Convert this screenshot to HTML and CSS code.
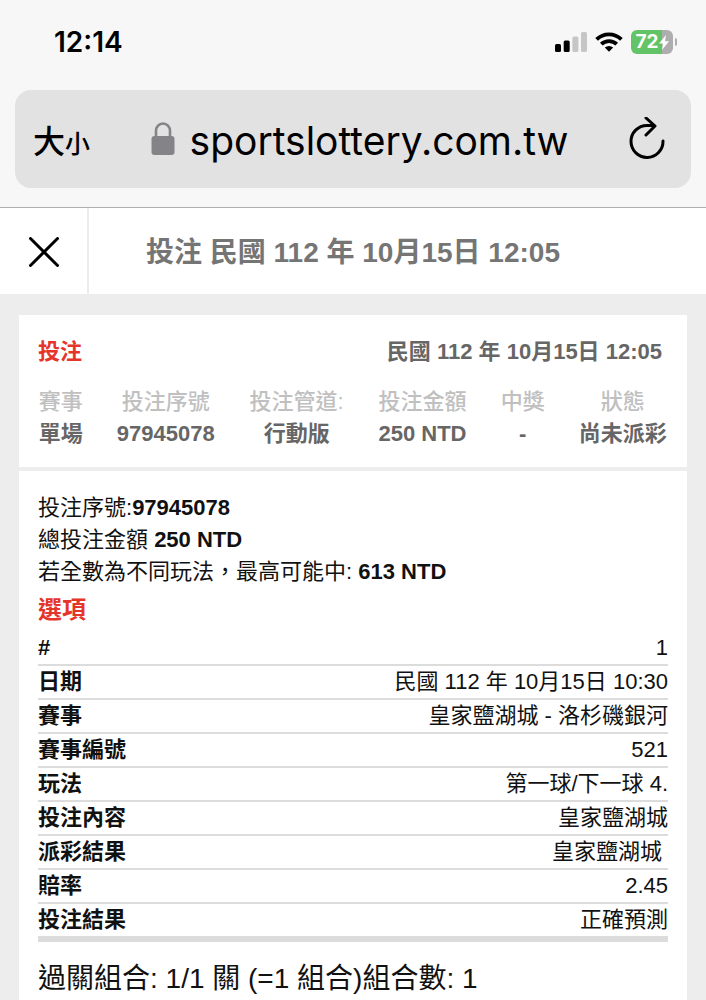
FILE: index.html
```html
<!DOCTYPE html>
<html lang="zh-Hant-TW">
<head>
    <meta charset="UTF-8">
    <meta name="viewport" content="width=device-width, initial-scale=1.0">
    <title>投注</title>
    <link rel="stylesheet" href="styles.css">
</head>
<body>
    <div class="browser">
        <div class="status">
            <span class="time">12:14</span>
            <div class="status-icons">
                <svg width="32" height="20" viewBox="0 0 32 20" aria-hidden="true">
                    <rect x="0" y="12" width="6" height="8" rx="1.5" fill="#000"/>
                    <rect x="8.7" y="8.5" width="6" height="11.5" rx="1.5" fill="#000"/>
                    <rect x="17.4" y="4.5" width="6" height="15.5" rx="1.5" fill="#c6c6c6"/>
                    <rect x="26" y="0" width="6" height="20" rx="1.5" fill="#c6c6c6"/>
                </svg>
                <svg width="28" height="20" viewBox="0 0 28 20" aria-hidden="true">
                    <g fill="none" stroke="#000" stroke-width="3.8">
                        <path d="M1.6 7.4a17.6 17.6 0 0 1 24.8 0"/>
                        <path d="M6.3 12.2a11 11 0 0 1 15.4 0"/>
                    </g>
                    <path d="M9.8 15.6a6 6 0 0 1 8.4 0L14 19.8z" fill="#000"/>
                </svg>
                <div class="battery">
                    <span class="battery-body">72<svg width="10" height="15" viewBox="0 0 10 15" aria-hidden="true"><path d="M7 0 0 8.5h4L3 15l7-8.7H6z" fill="#fff"/></svg></span>
                    <span class="battery-tip"></span>
                </div>
            </div>
        </div>
        <div class="address">
            <button type="button" class="text-size"><span class="big">大</span><span class="small">小</span></button>
            <a class="url" href="#">
                <svg width="24" height="34" viewBox="0 0 24 34" aria-hidden="true">
                    <path d="M5 16V9a7 7.5 0 0 1 14 0v7" fill="none" stroke="#838388" stroke-width="2.6"/>
                    <rect x="0.5" y="14" width="23" height="19" rx="3" fill="#838388"/>
                </svg>
                <span>sportslottery.com.tw</span>
            </a>
            <button type="button" class="reload" aria-label="重新載入">
                <svg width="36" height="44" viewBox="0 0 36 44" fill="none" stroke="#000" stroke-width="3" stroke-linecap="round" stroke-linejoin="round" aria-hidden="true">
                    <path d="M34 24a16 16 0 1 1-16-15.6h7"/>
                    <path d="M17 1l9 8-9 9"/>
                </svg>
            </button>
        </div>
    </div>

    <header class="title-bar">
        <button type="button" class="close" aria-label="關閉">
            <svg width="30" height="30" viewBox="0 0 30 30" stroke="#000" stroke-width="3" stroke-linecap="round" aria-hidden="true">
                <path d="M1.5 1.5l27 27M28.5 1.5l-27 27"/>
            </svg>
        </button>
        <h1>投注 民國 112 年 10月15日 12:05</h1>
    </header>

    <main>
        <section class="summary">
            <div class="summary-head">
                <h2>投注</h2>
                <span>民國 112 年 10月15日 12:05</span>
            </div>
            <table>
                <thead>
                    <tr><th>賽事</th><th>投注序號</th><th>投注管道:</th><th>投注金額</th><th>中獎</th><th>狀態</th></tr>
                </thead>
                <tbody>
                    <tr><td>單場</td><td>97945078</td><td>行動版</td><td>250 NTD</td><td>-</td><td>尚未派彩</td></tr>
                </tbody>
            </table>
        </section>

        <section class="detail">
            <p>投注序號:<b>97945078</b></p>
            <p>總投注金額 <b>250 NTD</b></p>
            <p>若全數為不同玩法，最高可能中: <b>613 NTD</b></p>
            <h3>選項</h3>
            <table>
                <tr><th>#</th><td>1</td></tr>
                <tr><th>日期</th><td>民國 112 年 10月15日 10:30</td></tr>
                <tr><th>賽事</th><td>皇家鹽湖城 - 洛杉磯銀河</td></tr>
                <tr><th>賽事編號</th><td>521</td></tr>
                <tr><th>玩法</th><td>第一球/下一球 4.</td></tr>
                <tr><th>投注內容</th><td>皇家鹽湖城</td></tr>
                <tr><th>派彩結果</th><td>皇家鹽湖城&nbsp;</td></tr>
                <tr><th>賠率</th><td>2.45</td></tr>
                <tr><th>投注結果</th><td>正確預測</td></tr>
            </table>
            <p class="combo">過關組合: 1/1 關 (=1 組合)組合數: 1</p>
        </section>
    </main>
</body>
</html>
```
FILE: styles.css
```css
* {
    box-sizing: border-box;
}
body {
    margin: 0;
    min-height: 100vh;
    display: flex;
    flex-direction: column;
    font-family: "Liberation Sans", "Noto Sans CJK TC", sans-serif;
    font-size: 22px;
    line-height: 32px;
    color: #111;
    background-color: #ededed;
}
h1, h2, h3, p {
    margin: 0;
}
button {
    padding: 0;
    border: none;
    background: none;
    color: #000;
    font-family: inherit;
    cursor: pointer;
}
svg {
    display: block;
}

/* browser bar */
.browser {
    padding: 0 15px 19px;
    background-color: #f7f7f7;
    border-bottom: 1px solid #b0b0b0;
    font-family: Inter, "Noto Sans CJK TC", sans-serif;
}
.status {
    display: flex;
    justify-content: space-between;
    align-items: center;
    height: 90px;
    padding: 0 14px 6px 39px;
}
.time {
    font-size: 28px;
    font-weight: 600;
    color: #000;
}
.status-icons {
    display: flex;
    align-items: center;
    gap: 8px;
}
.battery {
    display: flex;
    align-items: center;
    gap: 2px;
}
.battery-body {
    display: flex;
    align-items: center;
    justify-content: center;
    width: 42px;
    height: 24px;
    border-radius: 6px;
    background: linear-gradient(to right, #62c466 74%, #aeaeae 74%);
    color: #fff;
    font-size: 19px;
    font-weight: 700;
}
.battery-tip {
    width: 2px;
    height: 8px;
    border-radius: 0 2px 2px 0;
    background-color: #aeaeae;
}
.address {
    display: flex;
    justify-content: space-between;
    align-items: center;
    height: 98px;
    padding: 0 26px 0 18px;
    border-radius: 16px;
    background-color: #e2e2e2;
}
.text-size {
    display: flex;
    align-items: baseline;
    font-weight: 500;
}
.big {
    font-size: 32px;
}
.small {
    font-size: 25px;
}
.url {
    display: flex;
    align-items: center;
    gap: 15px;
    color: #000;
    font-size: 39px;
    line-height: 48px;
    text-decoration: none;
}
.url span {
    padding-top: 4px;
}

/* title */
.title-bar {
    display: flex;
    height: 86px;
    background-color: #fff;
}
.close {
    display: flex;
    align-items: center;
    justify-content: center;
    width: 89px;
    padding-top: 2px;
    border-right: 2px solid #ededed;
}
h1 {
    flex: 1;
    padding-right: 89px;
    color: #757575;
    font-size: 28px;
    line-height: 90px;
    text-align: center;
}

/* bet card */
main {
    flex: 1;
    display: flex;
    flex-direction: column;
    margin: 21px 19px 0;
}
table {
    width: 100%;
    border-collapse: collapse;
}
th, td {
    padding: 0;
}
.summary {
    padding: 21px 19px 17px;
    background-color: #fff;
    color: #666;
    font-weight: bold;
}
.summary-head {
    display: flex;
    justify-content: space-between;
    padding-right: 6px;
    margin-bottom: 18px;
}
h2 {
    color: #e5352b;
    font-size: 22px;
}
.summary th {
    color: #c0c0c0;
    font-weight: 500;
}
.summary th, .summary td {
    padding: 0 16px;
    text-align: center;
    white-space: nowrap;
}
.summary th:first-child, .summary td:first-child {
    padding-left: 0;
}
.summary th:last-child, .summary td:last-child {
    padding-right: 0;
}
.detail {
    flex: 1;
    margin-top: 4px;
    padding: 21px 19px 0;
    background-color: #fff;
}
h3 {
    color: #e5352b;
    font-size: 24px;
    line-height: 44px;
}
.detail table {
    border-bottom: 6px solid #dcdcdc;
}
.detail tr + tr {
    border-top: 2px solid #dcdcdc;
}
.detail th {
    text-align: left;
}
.detail td {
    text-align: right;
}
.combo {
    margin-top: 17px;
    font-size: 28px;
    line-height: 40px;
}
```
